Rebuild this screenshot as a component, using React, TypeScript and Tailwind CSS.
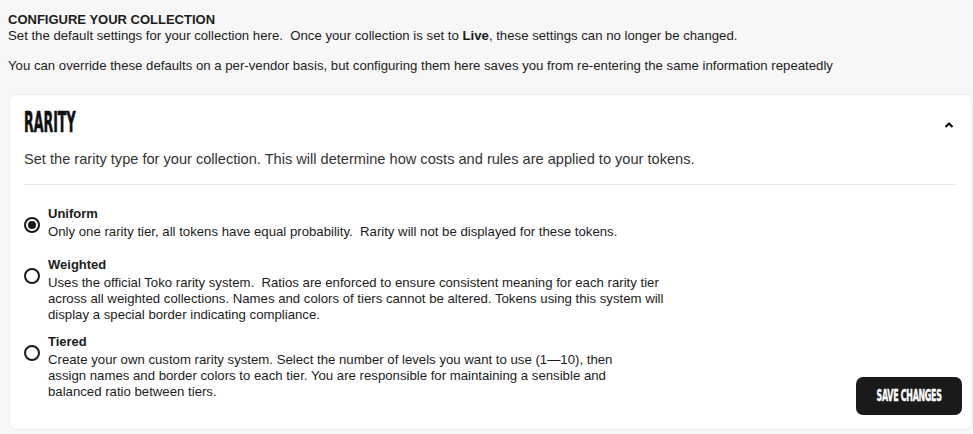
import React from "react";

const body = { fontFamily: '"Liberation Sans", Arial, sans-serif' };
const cond = { fontFamily: '"DejaVu Sans Condensed", "DejaVu Sans", sans-serif' };

function Radio({ checked }: { checked?: boolean }) {
  return (
    <div className="w-[16px] h-[16px] rounded-full border-2 border-[#1a1a1a] flex items-center justify-center shrink-0">
      {checked && <div className="w-[8px] h-[8px] rounded-full bg-[#1a1a1a]" />}
    </div>
  );
}

function Option({ checked, title, lines, mt }: { checked?: boolean; title: string; lines: string[]; mt: string }) {
  return (
    <div className={`flex ${mt}`}>
      <div className="w-[24px] pt-[11px]">
        <Radio checked={checked} />
      </div>
      <div className="text-[13.2px] leading-[16px] text-[#1c1c1c] whitespace-pre">
        <div className="font-bold text-[13px] mb-[2px]">{title}</div>
        {lines.map((l, i) => (
          <div key={i}>{l}</div>
        ))}
      </div>
    </div>
  );
}

export default function App() {
  return (
    <div className="w-[973px] h-[434px] bg-[#f7f7f7] overflow-hidden relative" style={body}>
      <div className="px-[8px] pt-[12px] text-[13.2px] text-[#1c1c1c]">
        <div className="font-bold text-[13px] leading-[16px]">CONFIGURE YOUR COLLECTION</div>
        <div className="leading-[16px] whitespace-pre">
          {"Set the default settings for your collection here.  Once your collection is set to "}<b>Live</b>{", these settings can no longer be changed."}
        </div>
        <div className="leading-[16px] mt-[14px]">
          You can override these defaults on a per-vendor basis, but configuring them here saves you from re-entering the same information repeatedly
        </div>
      </div>
      <div className="ml-[10px] mr-[2px] mt-[21px] h-[334px] bg-white rounded-[6px] shadow-[0_0_2px_rgba(0,0,0,0.12)] px-[14px] pt-[16px] relative">
        <div className="flex items-center justify-between h-[24px]">
          <div className="h-[24px] overflow-visible">
            <span
              className="inline-block font-bold text-[28px] leading-[24px] text-[#111] origin-left scale-x-[0.5] [-webkit-text-stroke:0.6px_#111]"
              style={cond}
            >
              RARITY
            </span>
          </div>
          <svg width="12" height="12" viewBox="0 0 12 12" className="mr-[2px] mt-[4px]">
            <path d="M2.5 8 L6 4.5 L9.5 8" fill="none" stroke="#111" strokeWidth="2.2" />
          </svg>
        </div>
        <div className="mt-[15px] text-[14.6px] leading-[18px] text-[#333]">
          Set the rarity type for your collection. This will determine how costs and rules are applied to your tokens.
        </div>
        <div className="mt-[16px] h-px bg-[#e8e8e8]" />
        <Option
          checked
          mt="mt-[21px]"
          title="Uniform"
          lines={["Only one rarity tier, all tokens have equal probability.  Rarity will not be displayed for these tokens."]}
        />
        <Option
          mt="mt-[17px]"
          title="Weighted"
          lines={[
            "Uses the official Toko rarity system.  Ratios are enforced to ensure consistent meaning for each rarity tier",
            "across all weighted collections. Names and colors of tiers cannot be altered. Tokens using this system will",
            "display a special border indicating compliance.",
          ]}
        />
        <Option
          mt="mt-[11px]"
          title="Tiered"
          lines={[
            "Create your own custom rarity system. Select the number of levels you want to use (1—10), then",
            "assign names and border colors to each tier. You are responsible for maintaining a sensible and",
            "balanced ratio between tiers.",
          ]}
        />
        <button className="absolute right-[9px] bottom-[14px] w-[106px] h-[38px] bg-[#1a1a1a] rounded-[7px] flex items-center justify-center overflow-hidden">
          <span className="inline-block whitespace-nowrap text-white font-bold text-[16px] tracking-[-0.5px] scale-x-[0.55] [-webkit-text-stroke:0.4px_white]" style={cond}>
            SAVE CHANGES
          </span>
        </button>
      </div>
    </div>
  );
}
